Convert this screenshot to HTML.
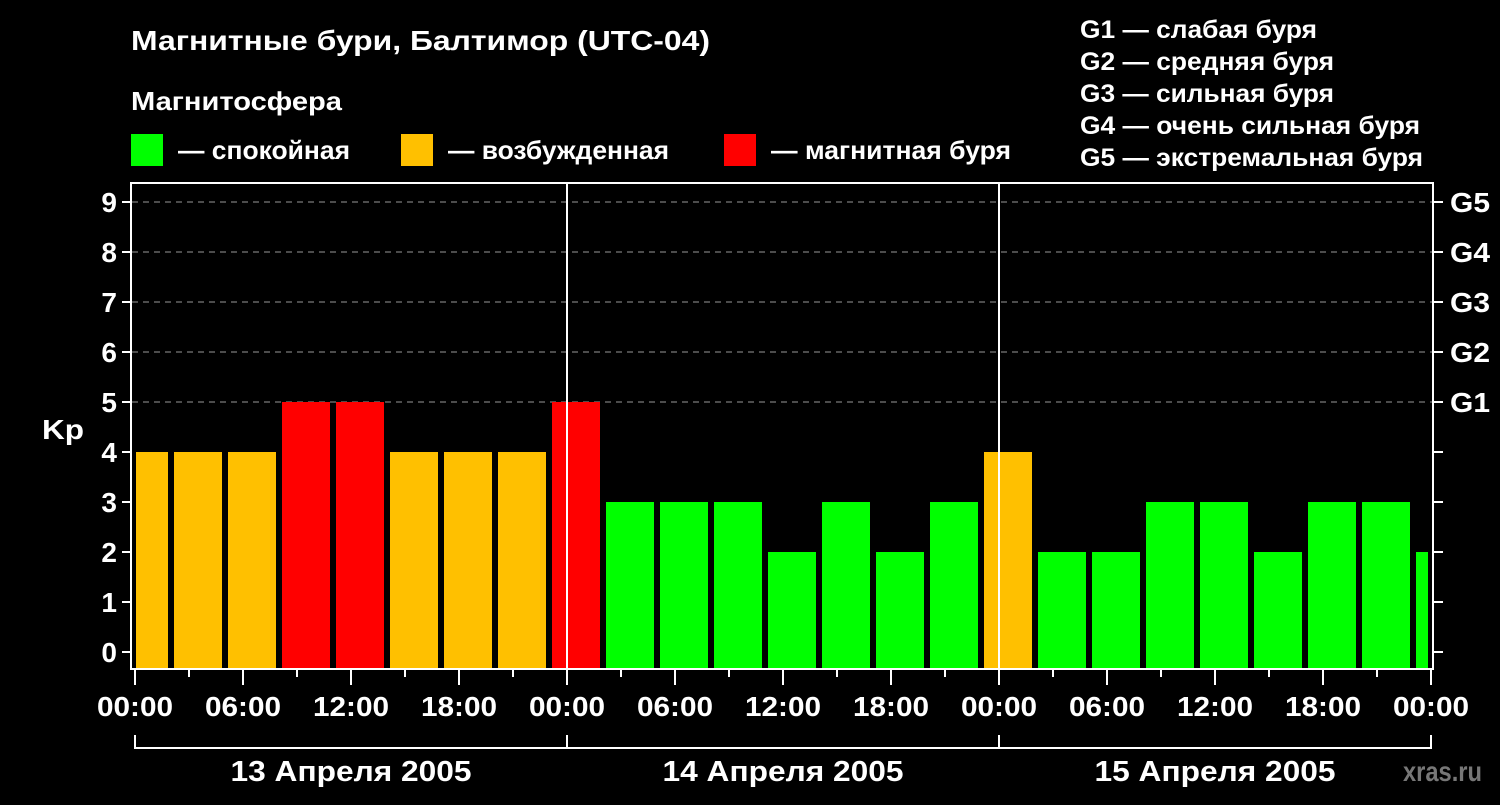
<!DOCTYPE html><html><head><meta charset="utf-8"><style>body{margin:0;background:#000;width:1500px;height:800px;overflow:hidden}svg text{font-family:"Liberation Sans",sans-serif;font-weight:bold;fill:#fff}</style></head><body>
<svg width="1500" height="800" xmlns="http://www.w3.org/2000/svg">
<text x="131" y="50" font-size="28" textLength="579" lengthAdjust="spacingAndGlyphs">Магнитные бури, Балтимор (UTC-04)</text>
<text x="131" y="110" font-size="26" textLength="211" lengthAdjust="spacingAndGlyphs">Магнитосфера</text>
<rect x="131" y="134" width="32" height="32" fill="#00ff00"/><text x="178" y="159" font-size="26" textLength="172" lengthAdjust="spacingAndGlyphs">— спокойная</text>
<rect x="401" y="134" width="32" height="32" fill="#ffc000"/><text x="448" y="159" font-size="26" textLength="221" lengthAdjust="spacingAndGlyphs">— возбужденная</text>
<rect x="724" y="134" width="32" height="32" fill="#ff0000"/><text x="771" y="159" font-size="26" textLength="240" lengthAdjust="spacingAndGlyphs">— магнитная буря</text>
<g font-size="25"><text x="1080" y="38" textLength="237" lengthAdjust="spacingAndGlyphs">G1 — слабая буря</text><text x="1080" y="70" textLength="254" lengthAdjust="spacingAndGlyphs">G2 — средняя буря</text><text x="1080" y="102" textLength="254" lengthAdjust="spacingAndGlyphs">G3 — сильная буря</text><text x="1080" y="134" textLength="340" lengthAdjust="spacingAndGlyphs">G4 — очень сильная буря</text><text x="1080" y="166" textLength="343" lengthAdjust="spacingAndGlyphs">G5 — экстремальная буря</text></g>
<g stroke="#999" stroke-dasharray="6,5" stroke-width="1"><line x1="132" x2="1432" y1="202" y2="202"/><line x1="132" x2="1432" y1="252" y2="252"/><line x1="132" x2="1432" y1="302" y2="302"/><line x1="132" x2="1432" y1="352" y2="352"/><line x1="132" x2="1432" y1="402" y2="402"/></g>
<g id="bars"></g>
<g stroke="#fff" stroke-width="2" fill="none">
<rect x="131" y="183" width="1302" height="486"/>
<line x1="567" x2="567" y1="183" y2="668"/><line x1="999" x2="999" y1="183" y2="668"/>
<path d="M135 735V748H1431V735M567 735V748M999 735V748"/>
</g>
<g id="ticks" stroke="#fff" stroke-width="2"></g>
<g font-size="28" text-anchor="end" id="yl"></g>
<text x="42" y="439" font-size="28" textLength="42" lengthAdjust="spacingAndGlyphs">Kp</text>
<g font-size="28" text-anchor="middle" id="xl"></g>
<g font-size="29" text-anchor="middle"><text x="351" y="781" textLength="241" lengthAdjust="spacingAndGlyphs">13 Апреля 2005</text><text x="783" y="781" textLength="241" lengthAdjust="spacingAndGlyphs">14 Апреля 2005</text><text x="1215" y="781" textLength="241" lengthAdjust="spacingAndGlyphs">15 Апреля 2005</text></g>
<text x="1403" y="781" font-size="28" textLength="79" lengthAdjust="spacingAndGlyphs" style="fill:#777">xras.ru</text>
</svg>
<script>
var ns="http://www.w3.org/2000/svg";function el(p,t,a,tx){var e=document.createElementNS(ns,t);for(var k in a)e.setAttribute(k,a[k]);if(tx!=null)e.textContent=tx;document.getElementById(p).appendChild(e);}
var v=[4,4,4,5,5,4,4,4,5,3,3,3,2,3,2,3,4,2,2,3,3,2,3,3,2];
v.forEach(function(x,k){var x0=120+54*k,x1=x0+48;x0=Math.max(x0,136);x1=Math.min(x1,1428);var c=x>=5?"#ff0000":x==4?"#ffc000":"#00ff00";var top=652-50*x;el("bars","rect",{x:x0,y:top,width:x1-x0,height:668-top,fill:c});});
for(var i=0;i<=9;i++){var y=652-50*i;el("ticks","line",{x1:122,x2:131,y1:y,y2:y});el("ticks","line",{x1:1434,x2:1443,y1:y,y2:y});el("yl","text",{x:117,y:y+10},String(i));}
["G1","G2","G3","G4","G5"].forEach(function(g,i){el("yl","text",{x:1490,y:412-50*i,textLength:40,lengthAdjust:"spacingAndGlyphs"},g);});
var L=["00:00","06:00","12:00","18:00"];
for(var j=0;j<=24;j++){var x=135+54*j;el("ticks","line",{x1:x,x2:x,y1:670,y2:j%2?677:685});if(j%2==0)el("xl","text",{x:x,y:716,textLength:76,lengthAdjust:"spacingAndGlyphs"},L[(j/2)%4]);}
</script>
</body></html>
